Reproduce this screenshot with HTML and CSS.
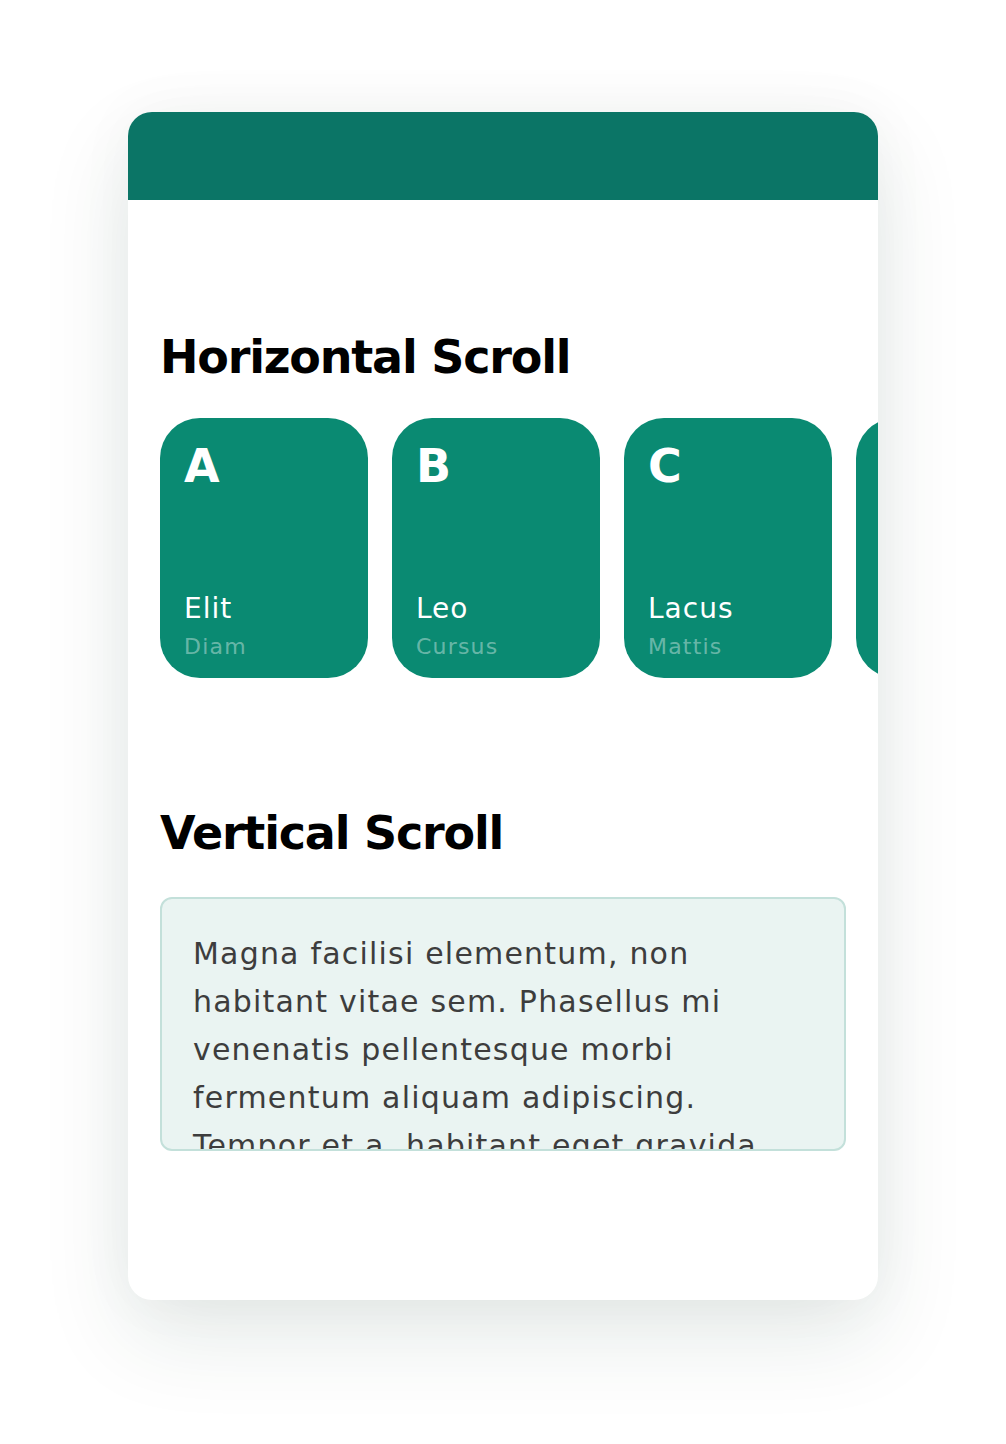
FILE: index.html
```html
<!DOCTYPE html>
<html lang="en">
<head>
<meta charset="utf-8">
<title>Scroll</title>
<link rel="stylesheet" href="styles.css">
</head>
<body>
<div class="phone">
  <header class="topbar"></header>
  <main class="content">
    <section class="section section-h">
      <h2 class="title">Horizontal Scroll</h2>
      <div class="hscroll">
        <div class="tile">
          <div class="tile-letter">A</div>
          <div class="tile-labels">
            <div class="tile-name">Elit</div>
            <div class="tile-sub">Diam</div>
          </div>
        </div>
        <div class="tile">
          <div class="tile-letter">B</div>
          <div class="tile-labels">
            <div class="tile-name">Leo</div>
            <div class="tile-sub">Cursus</div>
          </div>
        </div>
        <div class="tile">
          <div class="tile-letter">C</div>
          <div class="tile-labels">
            <div class="tile-name">Lacus</div>
            <div class="tile-sub">Mattis</div>
          </div>
        </div>
        <div class="tile tile-peek" aria-hidden="true"></div>
      </div>
    </section>
    <section class="section section-v">
      <h2 class="title">Vertical Scroll</h2>
      <div class="vscroll">
        <p class="vtext">Magna facilisi elementum, non habitant vitae sem. Phasellus mi venenatis pellentesque morbi fermentum aliquam adipiscing. Tempor et a, habitant eget gravida nunc. Sed ut lectus in tortor porta ultricies. Quisque viverra nibh non purus dictum, vel facilisis elit aliquet.</p>
      </div>
    </section>
  </main>
</div>
</body>
</html>
```
FILE: styles.css
```css
* { box-sizing: border-box; }
html, body { margin: 0; padding: 0; background: #ffffff; }
body {
  font-family: "DejaVu Sans", "Liberation Sans", sans-serif;
  height: 1444px;
  overflow: hidden;
}
.phone {
  width: 750px;
  height: 1188px;
  margin: 112px auto 0;
  background: #ffffff;
  border-radius: 24px;
  overflow: hidden;
  box-shadow: 0 36px 90px rgba(20, 60, 50, 0.11), 0 0 60px rgba(20, 60, 50, 0.04);
}
.topbar {
  height: 88px;
  background: #0b7566;
}
.content {
  padding-left: 32px;
}
.title {
  margin: 0;
  font-size: 46px;
  line-height: 58px;
  font-weight: 700;
  color: #000;
  letter-spacing: -1.2px;
}
.section-h { padding-top: 128px; }
.section-h .title { margin-bottom: 32px; }
.hscroll {
  display: flex;
  gap: 24px;
  overflow: hidden;
}
.tile {
  flex: 0 0 208px;
  height: 260px;
  border-radius: 40px;
  background: #0a8a72;
  color: #fff;
  padding: 25px 24px 17px;
  display: flex;
  flex-direction: column;
  justify-content: space-between;
}
.tile-letter {
  font-size: 46px;
  font-weight: 700;
  line-height: 46px;
}
.tile-labels { display: flex; flex-direction: column; gap: 7px; }
.tile-name {
  font-size: 28px;
  line-height: 34px;
  font-weight: 400;
  letter-spacing: 1px;
}
.tile-sub {
  font-size: 22px;
  line-height: 28px;
  letter-spacing: 1.2px;
  color: rgba(255, 255, 255, 0.4);
}
.section-v {
  padding-top: 126px;
  padding-right: 32px;
}
.section-v .title { margin-bottom: 35px; }
.vscroll {
  height: 254px;
  border: 2px solid #c3e0da;
  border-radius: 12px;
  background: #eaf4f2;
  overflow: hidden;
  padding: 31px 26px 0 31px;
}
.vtext {
  margin: 0;
  font-size: 30px;
  line-height: 48px;
  letter-spacing: 1.2px;
  color: #3d3d3d;
}
```
